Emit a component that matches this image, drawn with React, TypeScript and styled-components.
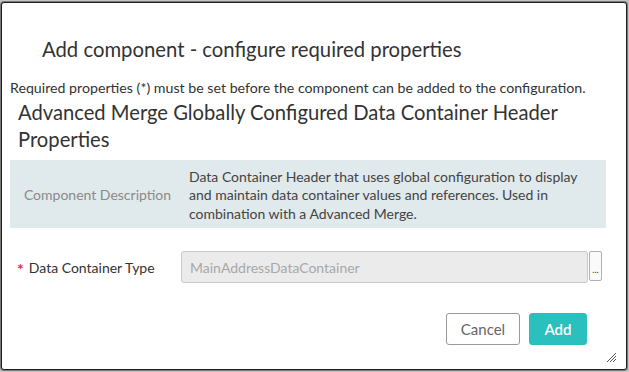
import React from "react";
import styled, { createGlobalStyle } from "styled-components";

const Global = createGlobalStyle`
  html, body { margin: 0; padding: 0; background: #c4c4c4; }
  body { font-family: "Lato", "Open Sans", sans-serif; }
  * { box-sizing: border-box; }
`;

const Page = styled.div`
  width: 629px;
  height: 372px;
  padding: 2px 2px 2px 1px;
`;

const Dialog = styled.div`
  position: relative;
  width: 626px;
  height: 368px;
  background: #fff;
  border: 1px solid #1e1e1e;
  box-shadow: 0 0 0 1px #7a7a7a;
  border-radius: 3px;
  display: flex;
  flex-direction: column;
  color: #333;
`;

const Title = styled.h1`
  margin: 33px 0 0 40px;
  font-size: 20.3px;
  line-height: 27px;
  font-weight: 400;
  color: #333;
`;

const Intro = styled.p`
  margin: 16px 0 0 8px;
  font-size: 14.2px;
  line-height: 18px;
  color: #333;
`;

const Heading = styled.h2`
  margin: 2px 0 0 16px;
  width: 566px;
  font-size: 20.2px;
  line-height: 27px;
  font-weight: 400;
  color: #333;
`;

const Panel = styled.div`
  margin: 7px 0 0 8px;
  width: 596px;
  height: 68px;
  background: #e0e9eb;
  display: grid;
  grid-template-columns: 175px 1fr;
  align-items: center;
`;

const PanelLabel = styled.div`
  text-align: center;
  font-size: 14px;
  color: #8a8a8a;
`;

const PanelText = styled.div`
  padding: 3px 14px 0 4px;
  font-size: 14px;
  line-height: 18.5px;
  color: #444;
`;

const FieldRow = styled.div`
  margin: 23px 0 0 15px;
  display: flex;
  align-items: center;
`;

const FieldLabel = styled.label`
  width: 164px;
  font-size: 14px;
  color: #333;
  display: flex;
  align-items: center;
`;

const Star = styled.span`
  color: #d9362b;
  font-size: 16px;
  font-weight: 700;
  margin-right: 5px;
  position: relative;
  top: 1px;
`;

const Input = styled.div`
  width: 407px;
  height: 32px;
  background: #ebebeb;
  border: 1px solid #c8c8c8;
  border-radius: 3px;
  padding-left: 8px;
  display: flex;
  align-items: center;
  font-size: 14px;
  color: #a8a8a8;
`;

const Ellipsis = styled.button`
  margin-left: 1px;
  width: 13px;
  height: 30px;
  padding: 0 0 6px;
  background: #fafafa;
  border: 1px solid #b0b0b0;
  border-radius: 2px;
  font-size: 9px;
  line-height: 1;
  color: #333;
  display: flex;
  align-items: flex-end;
  justify-content: center;
  align-self: flex-start;
  font-family: inherit;
`;

const Actions = styled.div`
  margin: 30px 0 0 0;
  padding-right: 39px;
  display: flex;
  justify-content: flex-end;
  gap: 9px;
`;

const Button = styled.button<{ $primary?: boolean }>`
  height: 32px;
  width: ${(p) => (p.$primary ? "58px" : "74px")};
  padding: 0;
  border-radius: 3px;
  font-family: inherit;
  font-size: 15px;
  border: 1px solid ${(p) => (p.$primary ? "#2bbfbd" : "#9a9a9a")};
  background: ${(p) => (p.$primary ? "#2bbfbd" : "#fff")};
  color: ${(p) => (p.$primary ? "#fff" : "#666")};
  font-weight: ${(p) => (p.$primary ? 600 : 400)};
`;

const Grip = styled.svg`
  position: absolute;
  right: 9px;
  bottom: 6px;
`;

export default function App() {
  return (
    <Page>
      <Global />
      <Dialog>
        <Title>Add component - configure required properties</Title>
        <Intro>
          Required properties (*) must be set before the component can be added to the configuration.
        </Intro>
        <Heading>Advanced Merge Globally Configured Data Container Header Properties</Heading>
        <Panel>
          <PanelLabel>Component Description</PanelLabel>
          <PanelText>
            Data Container Header that uses global configuration to display and maintain data container
            values and references. Used in combination with a Advanced Merge.
          </PanelText>
        </Panel>
        <FieldRow>
          <FieldLabel>
            <Star>*</Star>Data Container Type
          </FieldLabel>
          <Input>MainAddressDataContainer</Input>
          <Ellipsis>...</Ellipsis>
        </FieldRow>
        <Actions>
          <Button>Cancel</Button>
          <Button $primary>Add</Button>
        </Actions>
        <Grip width="11" height="11" viewBox="0 0 11 11">
          <path d="M1 10 L10 1 M4 10 L10 4 M7 10 L10 7" stroke="#555" strokeWidth="1" fill="none" />
        </Grip>
      </Dialog>
    </Page>
  );
}
